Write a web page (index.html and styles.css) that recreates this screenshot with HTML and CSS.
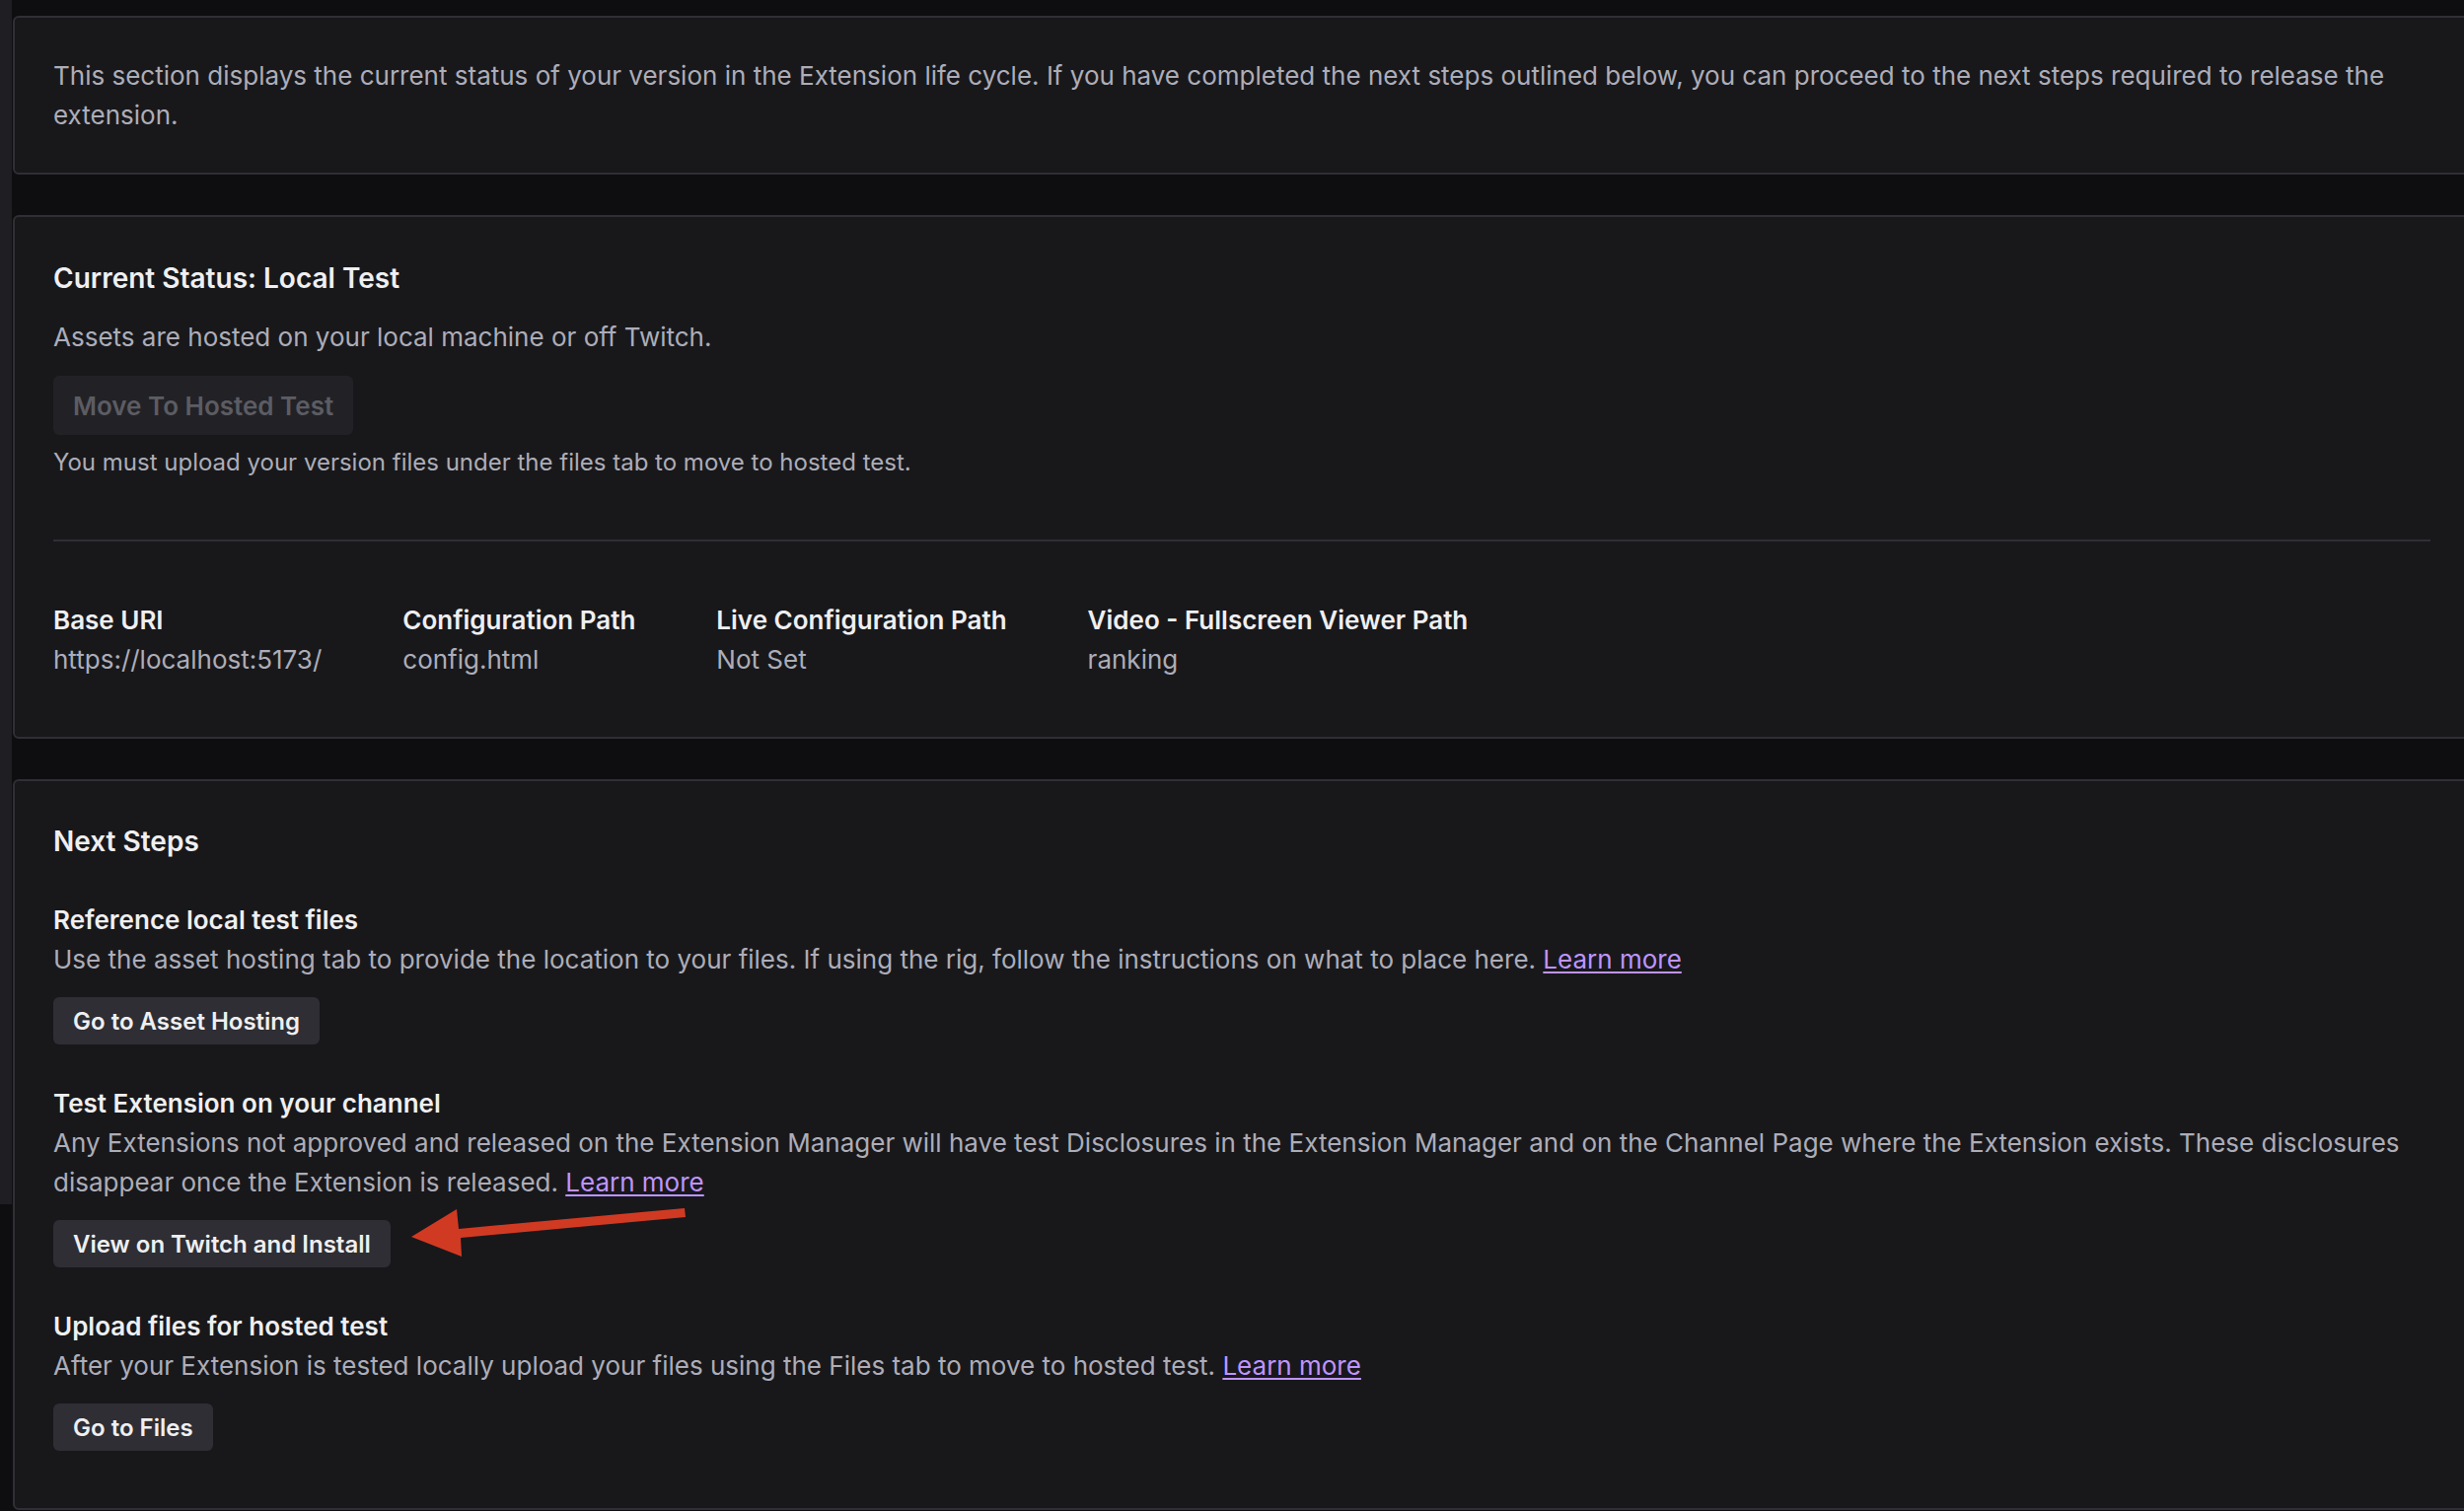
FILE: index.html
```html
<!DOCTYPE html>
<html lang="en">
<head>
<meta charset="utf-8">
<title>Version Status</title>
<link rel="stylesheet" href="styles.css">
</head>
<body>
<div class="layout">
  <div class="rail"></div>
  <main class="content">
    <section class="card card-intro">
      <p class="body-text">This section displays the current status of your version in the Extension life cycle. If you have completed the next steps outlined below, you can proceed to the next steps required to release the extension.</p>
    </section>

    <section class="card card-status">
      <h2 class="card-title">Current Status: Local Test</h2>
      <p class="body-text gap-title">Assets are hosted on your local machine or off Twitch.</p>
      <button class="btn btn-large btn-disabled" type="button">Move To Hosted Test</button>
      <p class="hint">You must upload your version files under the files tab to move to hosted test.</p>
      <hr class="divider">
      <div class="props">
        <div class="prop">
          <div class="prop-label">Base URI</div>
          <div class="prop-value">https://localhost:5173/</div>
        </div>
        <div class="prop">
          <div class="prop-label">Configuration Path</div>
          <div class="prop-value">config.html</div>
        </div>
        <div class="prop">
          <div class="prop-label">Live Configuration Path</div>
          <div class="prop-value">Not Set</div>
        </div>
        <div class="prop">
          <div class="prop-label">Video - Fullscreen Viewer Path</div>
          <div class="prop-value">ranking</div>
        </div>
      </div>
    </section>

    <section class="card card-steps">
      <h2 class="card-title">Next Steps</h2>
      <div class="step">
        <h3 class="step-title">Reference local test files</h3>
        <p class="body-text">Use the asset hosting tab to provide the location to your files. If using the rig, follow the instructions on what to place here. <a class="link" href="#">Learn more</a></p>
        <button class="btn" type="button">Go to Asset Hosting</button>
      </div>
      <div class="step">
        <h3 class="step-title">Test Extension on your channel</h3>
        <p class="body-text">Any Extensions not approved and released on the Extension Manager will have test Disclosures in the Extension Manager and on the Channel Page where the Extension exists. These disclosures disappear once the Extension is released. <a class="link" href="#">Learn more</a></p>
        <button class="btn" type="button">View on Twitch and Install</button>
      </div>
      <div class="step">
        <h3 class="step-title">Upload files for hosted test</h3>
        <p class="body-text">After your Extension is tested locally upload your files using the Files tab to move to hosted test. <a class="link" href="#">Learn more</a></p>
        <button class="btn" type="button">Go to Files</button>
      </div>
    </section>
  </main>
</div>
<svg class="arrow" width="290" height="58" viewBox="0 0 290 58" aria-hidden="true">
  <polygon points="7,30 53,2 55,22 284,1 285,10 57,31 58,50" fill="#d13a22"/>
</svg>
</body>
</html>
```

FILE: styles.css
```css
html, body {
  margin: 0;
  padding: 0;
  background: #0e0e10;
  overflow: hidden;
}

body {
  position: relative;
  width: 2498px;
  height: 1532px;
  font-family: Inter, "Noto Sans", "Liberation Sans", sans-serif;
  color: #adadb8;
}

.layout {
  display: flex;
  align-items: flex-start;
  gap: 1px;
}

.rail {
  flex: 0 0 12px;
  height: 1221px;
  background: #1f1f23;
}

.content {
  flex: 1 1 auto;
  margin-right: -7px;
  padding-top: 16px;
  display: flex;
  flex-direction: column;
  gap: 41px;
}

.card {
  background: #18181b;
  border: 2px solid #2f2f35;
  border-radius: 6px;
  padding: 42px 39px 58px;
}

.card-intro {
  padding: 39px 39px 38px;
}

.card-steps {
  padding-top: 41px;
}

.body-text {
  margin: 0;
  font-size: 26px;
  line-height: 40px;
  color: #adadb8;
}

.gap-title {
  margin-top: 20px;
}

.card-title {
  margin: 0;
  font-size: 28px;
  line-height: 40px;
  font-weight: 600;
  color: #efeff1;
}

.btn {
  display: inline-flex;
  align-items: center;
  height: 48px;
  margin-top: 18px;
  padding: 0 20px;
  border: 0;
  border-radius: 6px;
  background: #2e2e34;
  color: #efeff1;
  font-family: Inter, "Noto Sans", "Liberation Sans", sans-serif;
  font-size: 24px;
  font-weight: 600;
  cursor: pointer;
}

.btn-large {
  height: 60px;
  margin-top: 19px;
  font-size: 26px;
}

.btn-disabled {
  background: #222226;
  color: #5c5c63;
  cursor: default;
}

.hint {
  margin: 10px 0 0;
  font-size: 24px;
  line-height: 36px;
  color: #adadb8;
}

.divider {
  margin: 60px 0 0;
  border: 0;
  height: 2px;
  background: #2f2f35;
}

.props {
  display: flex;
  gap: 82px;
  margin-top: 60px;
}

.prop-label {
  font-size: 26px;
  line-height: 40px;
  font-weight: 600;
  color: #efeff1;
}

.prop-value {
  font-size: 26px;
  line-height: 40px;
  color: #adadb8;
}

.step {
  margin-top: 40px;
}

.step-title {
  margin: 0;
  font-size: 26px;
  line-height: 40px;
  font-weight: 600;
  color: #efeff1;
}

.link {
  color: #bf94ff;
  text-decoration: underline;
  text-underline-offset: 3px;
}

.arrow {
  position: absolute;
  left: 410px;
  top: 1224px;
}
```
